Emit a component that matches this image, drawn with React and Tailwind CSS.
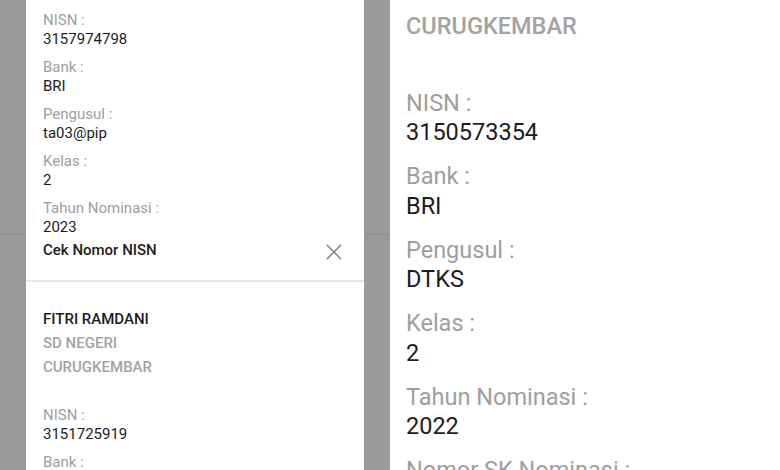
import React from 'react'

const font = { fontFamily: 'Roboto, "Noto Sans", Arial, sans-serif' }

function Field({ label, value, big }) {
  if (big) {
    return (
      <div className="mb-[14.5px]">
        <div className="text-[23.5px] leading-[29.5px] text-[#9e9e9e]">{label}</div>
        <div className="text-[23.5px] leading-[29.5px] text-[#1c1c1c]">{value}</div>
      </div>
    )
  }
  return (
    <div className="mb-[9px]">
      <div className="text-[15px] leading-[19px] text-[#9e9e9e]">{label}</div>
      <div className="text-[15px] leading-[19px] text-[#1c1c1c]">{value}</div>
    </div>
  )
}

function CloseIcon() {
  return (
    <svg width="16" height="16" viewBox="0 0 16 16" fill="none">
      <path d="M1.5 1.5 L14.5 14.5 M14.5 1.5 L1.5 14.5" stroke="#8a8a8a" strokeWidth="1.6" strokeLinecap="square" />
    </svg>
  )
}

function LeftScreen() {
  return (
    <div className="relative w-[390px] h-[470px] bg-[#9a9a9a] overflow-hidden px-[26px]">
      {/* edge of the app bar under the scrim */}
      <div className="absolute left-0 right-0 top-[234px] h-px bg-[#8e8e8e]" />
      <div className="relative bg-white h-full">
        <div className="px-[17px] pt-[11.4px]">
          <Field label="NISN :" value="3157974798" />
          <Field label="Bank :" value="BRI" />
          <Field label="Pengusul :" value="ta03@pip" />
          <Field label="Kelas :" value="2" />
          <div>
            <div className="text-[15px] leading-[19px] text-[#9e9e9e]">Tahun Nominasi :</div>
            <div className="text-[15px] leading-[19px] text-[#1c1c1c]">2023</div>
          </div>
          <div className="mt-[4px] h-[19px] flex items-center justify-between">
            <span className="text-[15px] leading-[19px] font-medium text-[#1c1c1c]">Cek Nomor NISN</span>
            <span className="mr-[5px] mt-[2px]"><CloseIcon /></span>
          </div>
        </div>
        <div className="mt-[20px] h-[2px] bg-[#e6e6e6]" />
        <div className="px-[17px] pt-[25px]">
          <div className="text-[15px] leading-[24px] font-medium text-[#1c1c1c]">FITRI RAMDANI</div>
          <div className="text-[15px] leading-[24px] font-medium text-[#a3a3a3]">SD NEGERI</div>
          <div className="text-[15px] leading-[24px] font-medium text-[#a3a3a3]">CURUGKEMBAR</div>
          <div className="mt-[27px]">
            <Field label="NISN :" value="3151725919" />
            <Field label="Bank :" value="BRI" />
          </div>
        </div>
      </div>
    </div>
  )
}

function RightScreen() {
  return (
    <div className="w-[390px] h-[470px] bg-white overflow-hidden px-[16px] pt-[12px]">
      <div className="text-[23.5px] leading-[29.5px] font-medium text-[#a3a3a3]">CURUGKEMBAR</div>
      <div className="mt-[47px]">
        <Field big label="NISN :" value="3150573354" />
        <Field big label="Bank :" value="BRI" />
        <Field big label="Pengusul :" value="DTKS" />
        <Field big label="Kelas :" value="2" />
        <Field big label="Tahun Nominasi :" value="2022" />
        <Field big label="Nomor SK Nominasi :" value="-" />
      </div>
    </div>
  )
}

export default function App() {
  return (
    <div className="flex w-[780px] h-[470px] overflow-hidden" style={font}>
      <LeftScreen />
      <RightScreen />
    </div>
  )
}
